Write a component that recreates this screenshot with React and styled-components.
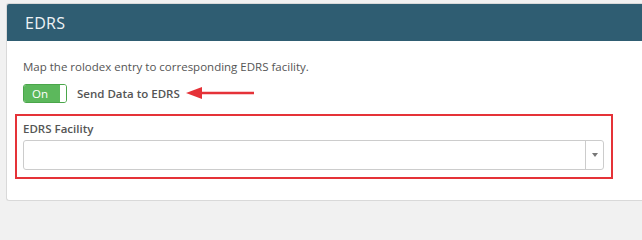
import styled, { createGlobalStyle } from 'styled-components';

const GlobalStyle = createGlobalStyle`
  body {
    margin: 0;
    background: #f1f1f1;
    font-family: 'Open Sans', 'Liberation Sans', sans-serif;
  }
`;

const Page = styled.div`
  padding: 3px 0 0 6px;
`;

const Card = styled.div`
  background: #fff;
  border: 1px solid #d9d9d9;
  border-right: none;
  border-radius: 3px 0 0 3px;
  overflow: hidden;
  height: 198px;
  box-sizing: border-box;
`;

const Header = styled.div`
  background: #2f5d72;
  color: #eef3f6;
  height: 37px;
  display: flex;
  align-items: center;
  padding-left: 18px;
  font-size: 16px;
  letter-spacing: 0.3px;
`;

const Body = styled.div`
  padding: 18px 0 0 8px;
`;

const Description = styled.p`
  margin: 0 0 0 8px;
  font-size: 11.5px;
  color: #555;
`;

const ToggleRow = styled.div`
  display: flex;
  align-items: center;
  margin: 9px 0 0 8px;
  height: 20px;
`;

const Toggle = styled.div`
  display: flex;
  width: 44px;
  height: 19px;
  border: 1px solid #4aa64a;
  border-radius: 3px;
  box-sizing: border-box;
  overflow: hidden;
`;

const ToggleOn = styled.div`
  flex: 1;
  background: #5cb85c;
  color: #fff;
  font-size: 11.5px;
  display: flex;
  align-items: center;
  padding-left: 8px;
`;

const Knob = styled.div`
  width: 6px;
  background: #fff;
`;

const ToggleLabel = styled.span`
  margin-left: 10px;
  font-size: 11.5px;
  font-weight: 600;
  color: #555;
`;

const Arrow = styled.svg`
  margin-left: 6px;
`;

const Highlight = styled.div`
  margin-top: 11px;
  width: 598px;
  height: 65px;
  border: 2px solid #e53238;
  box-sizing: border-box;
  padding: 5px 0 0 6px;
`;

const FieldLabel = styled.div`
  font-size: 11.5px;
  font-weight: 600;
  color: #555;
  height: 16px;
`;

const Select = styled.div`
  margin-top: 3px;
  width: 581px;
  height: 30px;
  border: 1px solid #ccc;
  border-radius: 3px;
  box-sizing: border-box;
  display: flex;
  justify-content: flex-end;
`;

const Caret = styled.div`
  width: 17px;
  border-left: 1px solid #ccc;
  display: flex;
  align-items: center;
  justify-content: center;
  &::after {
    content: '';
    border-left: 3px solid transparent;
    border-right: 3px solid transparent;
    border-top: 4px solid #777;
  }
`;

export default function App() {
  return (
    <Page>
      <GlobalStyle />
      <Card>
        <Header>EDRS</Header>
        <Body>
          <Description>Map the rolodex entry to corresponding EDRS facility.</Description>
          <ToggleRow>
            <Toggle>
              <ToggleOn>On</ToggleOn>
              <Knob />
            </Toggle>
            <ToggleLabel>Send Data to EDRS</ToggleLabel>
            <Arrow width="70" height="14" viewBox="0 0 70 14">
              <line x1="12" y1="7" x2="68" y2="7" stroke="#e53238" strokeWidth="2.5" />
              <polygon points="0,7 16,1 16,13" fill="#e53238" />
            </Arrow>
          </ToggleRow>
          <Highlight>
            <FieldLabel>EDRS Facility</FieldLabel>
            <Select>
              <Caret />
            </Select>
          </Highlight>
        </Body>
      </Card>
    </Page>
  );
}
